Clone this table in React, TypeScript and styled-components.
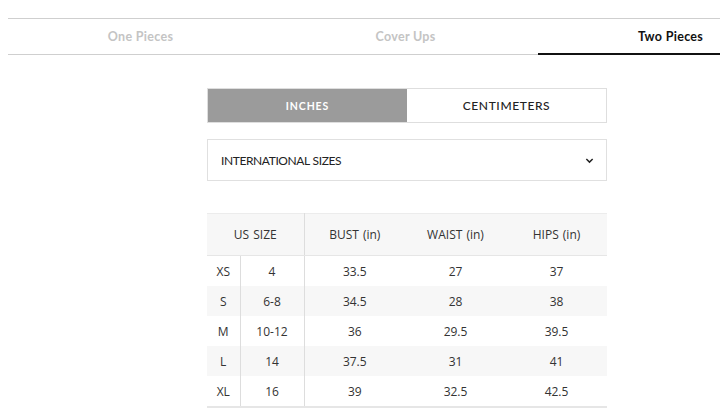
import React, { useState } from "react";
import styled, { createGlobalStyle } from "styled-components";

const GlobalStyle = createGlobalStyle`
  html, body {
    margin: 0;
    padding: 0;
    background: #ffffff;
    overflow: hidden;
  }
`;

const Page = styled.div`
  width: 720px;
  height: 420px;
  padding: 18px 0 0 8px;
  box-sizing: border-box;
  overflow: hidden;
`;

const TabBar = styled.div`
  border-top: 1px solid #cfcfcf;
  border-bottom: 1px solid #cfcfcf;
  height: 35px;
  overflow: visible;
`;

const TabRow = styled.div`
  display: flex;
  width: 795px;
  height: 100%;
`;

const Tab = styled.div<{ $active?: boolean }>`
  flex: 1;
  display: flex;
  align-items: center;
  justify-content: center;
  font-family: Lato, "Liberation Sans", sans-serif;
  font-size: 12.5px;
  font-weight: 700;
  letter-spacing: 0.3px;
  color: ${(p) => (p.$active ? "#111111" : "#c4c4c4")};
  height: ${(p) => (p.$active ? "34px" : "35px")};
  border-bottom: ${(p) => (p.$active ? "2px solid #111111" : "none")};
  margin-bottom: ${(p) => (p.$active ? "-1px" : "0")};
  cursor: pointer;
`;

const Content = styled.div`
  width: 400px;
  margin: 33px 0 0 199px;
`;

const Toggle = styled.div`
  display: flex;
  height: 35px;
  border: 1px solid #dedede;
  box-sizing: border-box;
`;

const UnitButton = styled.button<{ $active?: boolean }>`
  flex: 1;
  border: none;
  margin: 0;
  padding: 0;
  font-family: Lato, "Liberation Sans", sans-serif;
  font-size: ${(p) => (p.$active ? "10.5px" : "12px")};
  font-weight: ${(p) => (p.$active ? 700 : 500)};
  letter-spacing: ${(p) => (p.$active ? "0.9px" : "0.6px")};
  background: ${(p) => (p.$active ? "#9b9b9b" : "#ffffff")};
  color: ${(p) => (p.$active ? "#ffffff" : "#222222")};
  cursor: pointer;
`;

const Select = styled.div`
  margin-top: 16px;
  height: 42px;
  border: 1px solid #e0e0e0;
  box-sizing: border-box;
  display: flex;
  align-items: center;
  justify-content: space-between;
  padding: 0 12px 0 13px;
  font-family: Lato, "Liberation Sans", sans-serif;
  font-size: 12px;
  color: #222222;
  letter-spacing: -0.4px;
  word-spacing: 0.5px;
`;

const Chevron = styled.svg`
  width: 9px;
  height: 9px;
  margin-top: 1px;
`;

const Table = styled.table`
  margin-top: 32px;
  width: 400px;
  border-collapse: collapse;
  table-layout: fixed;
  font-family: "Open Sans", "Liberation Sans", sans-serif;
  font-size: 12px;
  color: #333333;
  border-top: 1px solid #ececec;
  border-bottom: 2px solid #e6e6e6;
`;

const HeadCell = styled.th<{ $divider?: boolean }>`
  height: 41px;
  padding: 0;
  font-weight: 400;
  word-spacing: 1px;
  background: #f7f7f7;
  border-bottom: 1px solid #e6e6e6;
  border-right: ${(p) => (p.$divider ? "1px solid #dddddd" : "none")};
`;

const Row = styled.tr<{ $shaded?: boolean }>`
  background: ${(p) => (p.$shaded ? "#f7f7f7" : "#ffffff")};
`;

const Cell = styled.td<{ $divider?: boolean }>`
  height: 30px;
  padding: 0;
  text-align: center;
  border-right: ${(p) => (p.$divider ? "1px solid #dddddd" : "none")};
`;

const rows = [
  ["XS", "4", "33.5", "27", "37"],
  ["S", "6-8", "34.5", "28", "38"],
  ["M", "10-12", "36", "29.5", "39.5"],
  ["L", "14", "37.5", "31", "41"],
  ["XL", "16", "39", "32.5", "42.5"],
];

export default function App() {
  const [unit, setUnit] = useState("in");
  const [tab, setTab] = useState(2);
  const tabs = ["One Pieces", "Cover Ups", "Two Pieces"];

  return (
    <Page>
      <GlobalStyle />
      <TabBar>
        <TabRow>
          {tabs.map((t, i) => (
            <Tab key={t} $active={tab === i} onClick={() => setTab(i)}>
              {t}
            </Tab>
          ))}
        </TabRow>
      </TabBar>
      <Content>
        <Toggle>
          <UnitButton $active={unit === "in"} onClick={() => setUnit("in")}>
            INCHES
          </UnitButton>
          <UnitButton $active={unit === "cm"} onClick={() => setUnit("cm")}>
            CENTIMETERS
          </UnitButton>
        </Toggle>
        <Select>
          <span>INTERNATIONAL SIZES</span>
          <Chevron viewBox="0 0 10 10">
            <path
              d="M1.5 3.2 L5 6.8 L8.5 3.2"
              fill="none"
              stroke="#222"
              strokeWidth="1.6"
            />
          </Chevron>
        </Select>
        <Table>
          <colgroup>
            <col style={{ width: 33 }} />
            <col style={{ width: 64 }} />
            <col style={{ width: 101 }} />
            <col style={{ width: 101 }} />
            <col style={{ width: 101 }} />
          </colgroup>
          <thead>
            <tr>
              <HeadCell colSpan={2} $divider>
                US SIZE
              </HeadCell>
              <HeadCell>BUST (in)</HeadCell>
              <HeadCell>WAIST (in)</HeadCell>
              <HeadCell>HIPS (in)</HeadCell>
            </tr>
          </thead>
          <tbody>
            {rows.map((r, i) => (
              <Row key={r[0]} $shaded={i % 2 === 1}>
                {r.map((v, j) => (
                  <Cell key={j} $divider={j < 2}>
                    {v}
                  </Cell>
                ))}
              </Row>
            ))}
          </tbody>
        </Table>
      </Content>
    </Page>
  );
}
